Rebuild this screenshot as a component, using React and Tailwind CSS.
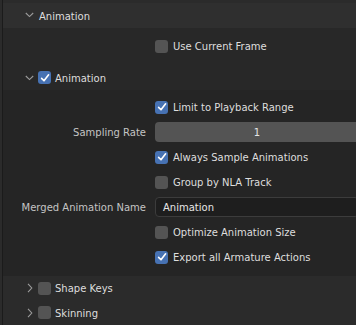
import React from "react";

const font = { fontFamily: '"DejaVu Sans", "Liberation Sans", sans-serif' };

function ChevronDown() {
  return (
    <svg width="9" height="6" viewBox="0 0 9 6" className="shrink-0">
      <path d="M0.8 1 L4.5 4.6 L8.2 1" fill="none" stroke="#9c9c9c" strokeWidth="1.1" />
    </svg>
  );
}

function ChevronRight() {
  return (
    <svg width="6" height="10" viewBox="0 0 6 10" className="shrink-0">
      <path d="M1 0.8 L4.8 5 L1 9.2" fill="none" stroke="#9c9c9c" strokeWidth="1.1" />
    </svg>
  );
}

function Check({ on }) {
  return (
    <div
      className={
        "w-[13px] h-[13px] rounded-[3px] shrink-0 flex items-center justify-center " +
        (on ? "bg-[#4772b3]" : "bg-[#545454]")
      }
    >
      {on && (
        <svg width="10" height="10" viewBox="0 0 10 10">
          <path d="M1.6 5.4 L4 7.8 L8.6 1.8" fill="none" stroke="#ffffff" strokeWidth="1.6" strokeLinecap="round" strokeLinejoin="round" />
        </svg>
      )}
    </div>
  );
}

function CheckRow({ on, label }) {
  return (
    <div className="h-[25px] flex items-center">
      <div className="w-[152px] shrink-0" />
      <Check on={on} />
      <span className="ml-[5px] pt-[2px] text-[#dedede] whitespace-nowrap">{label}</span>
    </div>
  );
}

export default function App() {
  return (
    <div className="w-[356px] h-[325px] bg-[#2b2b2b] flex overflow-hidden text-[10px] leading-none" style={font}>
      <div className="w-[2px] shrink-0 bg-[#2b2b2b]" />
      <div className="w-px shrink-0 bg-[#1b1b1b]" />
      <div className="flex-1 flex flex-col min-w-0">
        <div className="h-[3px] bg-[#2b2b2b]" />
        {/* Header */}
        <div className="h-[25px] bg-[#2f2f2f] flex items-center pl-[22px]">
          <ChevronDown />
          <span className="ml-[5px] pt-[3px] text-[#dedede]">Animation</span>
        </div>
        {/* Content */}
        <div className="bg-[#282828] flex flex-col pt-[6px]">
          <CheckRow on={false} label="Use Current Frame" />
          <div className="h-[7px]" />
          <div className="h-[24px] flex items-center pl-[22px]">
            <ChevronDown />
            <div className="ml-[4px]">
              <Check on={true} />
            </div>
            <span className="ml-[4px] pt-[2px] text-[#dedede]">Animation</span>
          </div>
          <div className="bg-[#252525] flex flex-col pt-[5px] pb-[6px]">
            <CheckRow on={true} label="Limit to Playback Range" />
            <div className="h-[25px] flex items-center">
              <div className="w-[152px] shrink-0 text-right pr-[9px] pt-[2px] text-[#c4c4c4] whitespace-nowrap">Sampling Rate</div>
              <div className="w-[204px] shrink-0 h-[20px] rounded-[4px] bg-[#545454] flex items-center justify-center pt-[2px] text-[#e6e6e6]">
                1
              </div>
            </div>
            <CheckRow on={true} label="Always Sample Animations" />
            <CheckRow on={false} label="Group by NLA Track" />
            <div className="h-[25px] flex items-center">
              <div className="w-[152px] shrink-0 text-right pr-[9px] pt-[2px] text-[#c4c4c4] whitespace-nowrap">Merged Animation Name</div>
              <div className="w-[204px] shrink-0 h-[20px] rounded-[4px] bg-[#1e1e1e] border border-[#3c3c3c] flex items-center pl-[7px] pt-[2px] text-[#e6e6e6]">
                Animation
              </div>
            </div>
            <CheckRow on={false} label="Optimize Animation Size" />
            <CheckRow on={true} label="Export all Armature Actions" />
          </div>
        </div>
        <div className="h-[1px]" />
        <div className="h-[24px] flex items-center pl-[24px]">
          <ChevronRight />
          <div className="ml-[5px]">
            <Check on={false} />
          </div>
          <span className="ml-[4px] pt-[2px] text-[#dedede]">Shape Keys</span>
        </div>
        <div className="h-[25px] flex items-center pl-[24px]">
          <ChevronRight />
          <div className="ml-[5px]">
            <Check on={false} />
          </div>
          <span className="ml-[4px] pt-[2px] text-[#dedede]">Skinning</span>
        </div>
      </div>
    </div>
  );
}
